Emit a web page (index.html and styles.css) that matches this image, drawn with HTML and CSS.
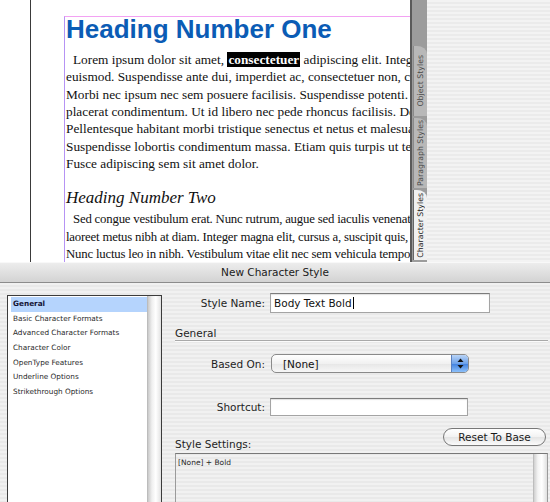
FILE: index.html
```html
<!DOCTYPE html>
<html>
<head>
<meta charset="utf-8">
<title>New Character Style</title>
<link rel="stylesheet" href="styles.css">
</head>
<body>
<div class="screen">
  <div class="doc">
    <div class="page">
      <div class="pasteboard"></div>
      <div class="page-edge"></div>
      <div class="page-margin"></div>
      <div class="frame">
        <h1 class="h1">Heading Number One</h1>
        <div class="para">
          <div class="line indent">Lorem ipsum dolor sit amet, <span class="sel">consectetuer</span> adipiscing elit. Integer aliquam</div>
          <div class="line">euismod. Suspendisse ante dui, imperdiet ac, consectetuer non, congue</div>
          <div class="line">Morbi nec ipsum nec sem posuere facilisis. Suspendisse potenti. Nunc</div>
          <div class="line">placerat condimentum. Ut id libero nec pede rhoncus facilisis. Donec</div>
          <div class="line">Pellentesque habitant morbi tristique senectus et netus et malesuada</div>
          <div class="line">Suspendisse lobortis condimentum massa. Etiam quis turpis ut tellus</div>
          <div class="line">Fusce adipiscing sem sit amet dolor.</div>
        </div>
        <h2 class="h2">Heading Number Two</h2>
        <div class="para second">
          <div class="line indent">Sed congue vestibulum erat. Nunc rutrum, augue sed iaculis venenatis</div>
          <div class="line">laoreet metus nibh at diam. Integer magna elit, cursus a, suscipit quis,</div>
          <div class="line">Nunc luctus leo in nibh. Vestibulum vitae elit nec sem vehicula tempor</div>
        </div>
        <div class="peek"></div>
      </div>
    </div>
    <div class="tabs">
      <div class="tab-gap"></div>
      <div class="tab"><span class="tab-label">Object Styles</span></div>
      <div class="tab"><span class="tab-label">Paragraph Styles</span></div>
      <div class="tab active"><span class="tab-label">Character Styles</span></div>
    </div>
    <div class="panel"></div>
  </div>

  <div class="dialog">
    <div class="titlebar">New Character Style</div>
    <div class="dialog-body">
      <div class="list">
        <ul class="items">
          <li class="item selected">General</li>
          <li class="item">Basic Character Formats</li>
          <li class="item">Advanced Character Formats</li>
          <li class="item">Character Color</li>
          <li class="item">OpenType Features</li>
          <li class="item">Underline Options</li>
          <li class="item">Strikethrough Options</li>
        </ul>
        <div class="list-scroll"></div>
      </div>

      <div class="form">
        <div class="row">
          <label class="label">Style Name:</label>
          <div class="input name-input">Body Text Bold<span class="caret"></span></div>
        </div>

        <div class="section">General</div>

        <div class="row row-based">
          <label class="label">Based On:</label>
          <div class="popup">
            <span class="popup-text">[None]</span>
            <span class="stepper">
              <svg width="7" height="11" viewBox="0 0 7 11"><path d="M3.5 0.5 L6.5 4 L0.5 4 Z" fill="#111"/><path d="M0.5 7 L6.5 7 L3.5 10.5 Z" fill="#111"/></svg>
            </span>
          </div>
        </div>

        <div class="row row-shortcut">
          <label class="label">Shortcut:</label>
          <div class="input short-input"></div>
        </div>

        <div class="settings-head">
          <span class="settings-label">Style Settings:</span>
          <span class="button">Reset To Base</span>
        </div>

        <div class="settings-box">
          <div class="settings-text">[None] + Bold</div>
          <div class="box-scroll"></div>
        </div>
      </div>
    </div>
  </div>
</div>
</body>
</html>
```

FILE: styles.css
```css
html, body {
  margin: 0;
  padding: 0;
}

body {
  width: 550px;
  height: 502px;
  overflow: hidden;
  background: #ffffff;
}

.screen {
  width: 550px;
  height: 502px;
  overflow: hidden;
}

/* ---------- document area ---------- */

.doc {
  display: flex;
  height: 262px;
  overflow: hidden;
}

.page {
  display: flex;
  width: 410px;
  flex: none;
  background: #ffffff;
  overflow: hidden;
}

.pasteboard {
  width: 30px;
  flex: none;
}

.page-edge {
  width: 1px;
  flex: none;
  background: #3a3a3a;
}

.page-margin {
  width: 33px;
  flex: none;
}

.frame {
  flex: 1;
  min-width: 0;
  margin-top: 16px;
  border-top: 1px solid #f3a2f3;
  border-left: 1px solid #b693f4;
  padding-left: 1px;
  overflow: hidden;
}

.h1 {
  margin: 0;
  padding-top: 1px;
  font-family: "Liberation Sans", Arial, sans-serif;
  font-weight: bold;
  font-size: 26px;
  line-height: 22px;
  color: #0b5cb5;
  white-space: nowrap;
}

.para {
  margin-top: 11px;
  font-family: "Liberation Serif", "Times New Roman", serif;
  font-size: 13.3px;
  line-height: 17.33px;
  color: #111;
}

.para.second {
  margin-top: 3px;
  font-size: 12.8px;
  letter-spacing: -0.2px;
}

.line {
  white-space: nowrap;
}

.indent {
  text-indent: 7px;
}

.sel {
  background: #000;
  color: #fff;
  font-weight: bold;
  padding: 0 1px;
}

.h2 {
  margin: 16px 0 0 0;
  font-family: "Liberation Serif", "Times New Roman", serif;
  font-style: italic;
  font-weight: normal;
  font-size: 17px;
  line-height: 20px;
  color: #111;
  white-space: nowrap;
}

/* tops of the next line, hidden behind the dialog */
.peek {
  height: 3px;
  margin-top: 2px;
  width: 330px;
  background: repeating-linear-gradient(to right, #777 0 3px, transparent 3px 6px, #999 6px 8px, transparent 8px 14px);
  opacity: 0.6;
}

/* ---------- panel tabs ---------- */

.tabs {
  width: 15px;
  flex: none;
  display: flex;
  flex-direction: column;
  background: #9c9c9c;
  border-left: 2px solid #5a5a5a;
}

.tab-gap {
  height: 44px;
  flex: none;
}

.tab {
  height: 70px;
  flex: none;
  margin-top: 2px;
  margin-left: 1px;
  background: #b8b8b8;
  border-top-right-radius: 10px 8px;
  display: flex;
  align-items: center;
  justify-content: center;
  border-left: 1px solid #8a8a8a;
}

.tab.active {
  background: #f0f0f0;
  border-left: 1px solid #666;
  height: 70px;
}

.tab-label {
  writing-mode: vertical-rl;
  transform: rotate(180deg);
  font-family: "DejaVu Sans", sans-serif;
  font-size: 7.8px;
  color: #4a4a4a;
  white-space: nowrap;
}

.tab.active .tab-label {
  color: #222;
}

.panel {
  flex: 1;
  background: repeating-linear-gradient(#f3f3f3 0 2px, #ebebeb 2px 4px);
}

/* ---------- dialog ---------- */

.dialog {
  height: 240px;
  font-family: "DejaVu Sans", sans-serif;
  color: #1e1e1e;
}

.titlebar {
  height: 20px;
  border-bottom: 1px solid #8c8c8c;
  background: linear-gradient(#eeeeee, #d3d3d3);
  text-align: center;
  font-size: 10.5px;
  line-height: 20px;
  color: #202020;
  box-shadow: inset 0 1px 0 #f8f8f8;
}

.dialog-body {
  display: flex;
  height: 219px;
  background: repeating-linear-gradient(#f1f1f1 0 2px, #e9e9e9 2px 4px);
}

.list {
  margin: 12px 0 0 7px;
  width: 155px;
  height: 220px;
  flex: none;
  box-sizing: border-box;
  border: 1px solid #3c3c3c;
  border-bottom: none;
  background: #ffffff;
  display: flex;
}

.items {
  list-style: none;
  margin: 0;
  padding: 1px 0 0 3px;
  flex: 1;
}

.item {
  height: 14.7px;
  line-height: 14.7px;
  padding-left: 2px;
  font-size: 7.3px;
  color: #2a2a2a;
  white-space: nowrap;
}

.item.selected {
  background: #b5d4fd;
  font-weight: bold;
  color: #151535;
}

.list-scroll {
  width: 13px;
  flex: none;
  background: linear-gradient(to right, #c9c9c9, #efefef 30%, #ffffff 60%, #e2e2e2);
  border-left: 1px solid #bcbcbc;
}

.form {
  margin-left: 13px;
  width: 373px;
  padding-top: 10px;
  flex: none;
}

.row {
  display: grid;
  grid-template-columns: 90px auto;
  column-gap: 5px;
  align-items: center;
  justify-content: start;
}

.label {
  text-align: right;
  font-size: 10.5px;
  color: #1e1e1e;
}

.input {
  box-sizing: border-box;
  background: #ffffff;
  border: 1px solid #a4a4a4;
  border-top-color: #7c7c7c;
  box-shadow: inset 0 1px 1px rgba(0,0,0,0.12);
}

.name-input {
  width: 220px;
  height: 20px;
  padding-left: 3px;
  font-size: 10.5px;
  line-height: 18px;
  color: #111;
  display: flex;
  align-items: center;
}

.caret {
  display: inline-block;
  width: 1px;
  height: 12px;
  background: #000;
  margin-left: 1px;
}

.section {
  margin-top: 13px;
  font-size: 10.5px;
  line-height: 14px;
  border-bottom: 1px solid #a9a9a9;
  box-shadow: 0 1px 0 #fbfbfb;
  color: #1e1e1e;
}

.row-based {
  margin-top: 13px;
  column-gap: 6px;
}

.popup {
  box-sizing: border-box;
  width: 198px;
  height: 19px;
  border: 1px solid #8a8a8a;
  border-radius: 5px;
  background: linear-gradient(#ffffff, #f1f1f1 50%, #e6e6e6 51%, #f7f7f7);
  display: flex;
  align-items: center;
  overflow: hidden;
}

.popup-text {
  flex: 1;
  padding-left: 11px;
  font-size: 10.5px;
  color: #111;
}

.stepper {
  width: 16px;
  height: 100%;
  flex: none;
  display: flex;
  align-items: center;
  justify-content: center;
  border-left: 1px solid #5a80c0;
  background: linear-gradient(#b9d4f7, #6ea2ea 50%, #3f7fdf 51%, #8cc0fa);
}

.row-shortcut {
  margin-top: 25px;
}

.short-input {
  width: 198px;
  height: 18px;
}

.settings-head {
  margin-top: 12px;
  height: 23px;
  display: flex;
  justify-content: space-between;
  align-items: flex-start;
}

.settings-label {
  align-self: flex-end;
  font-size: 10.5px;
  line-height: 14px;
  color: #1e1e1e;
}

.button {
  box-sizing: border-box;
  width: 103px;
  height: 18px;
  margin-right: 2px;
  border: 1px solid #777;
  border-radius: 9px;
  background: linear-gradient(#ffffff, #f2f2f2 50%, #e4e4e4 51%, #fbfbfb);
  text-align: center;
  font-size: 10.5px;
  line-height: 16px;
  color: #1a1a1a;
}

.settings-box {
  margin-top: 2px;
  height: 70px;
  box-sizing: border-box;
  border: 1px solid #9a9a9a;
  border-top-color: #787878;
  display: flex;
}

.settings-text {
  flex: 1;
  padding: 4px 0 0 2px;
  font-size: 7.5px;
  color: #2a2a2a;
}

.box-scroll {
  width: 13px;
  flex: none;
  background: linear-gradient(to right, #d0d0d0, #f4f4f4 30%, #ffffff 60%, #e0e0e0);
  border-left: 1px solid #bdbdbd;
}
```
